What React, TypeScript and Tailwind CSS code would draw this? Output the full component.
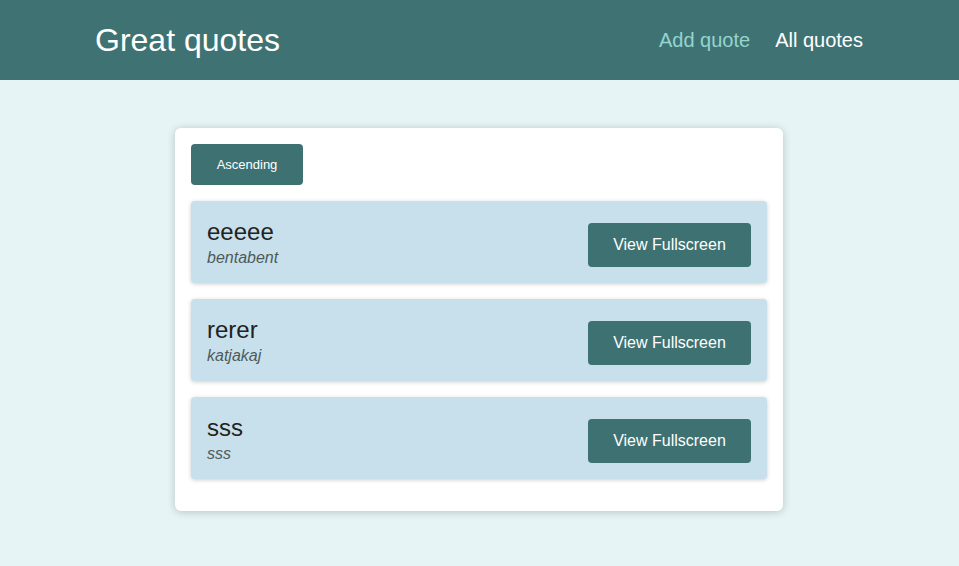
const quotes = [
  { id: "q1", text: "eeeee", author: "bentabent" },
  { id: "q2", text: "rerer", author: "katjakaj" },
  { id: "q3", text: "sss", author: "sss" },
];

const QuoteItem = ({ text, author }: { text: string; author: string }) => {
  return (
    <li className="flex items-start justify-between rounded bg-[#c8e0eb] p-4 shadow-[0_1px_4px_rgba(0,0,0,0.2)]">
      <figure>
        <blockquote className="text-[24px] leading-[30px] text-[#222]">{text}</blockquote>
        <figcaption className="mt-[1px] text-[16px] italic leading-[19px] text-[#4e5a5a]">{author}</figcaption>
      </figure>
      <a
        href="#"
        className="mt-[6px] flex h-[44px] w-[163px] items-center justify-center rounded bg-[#3e7272] text-[16px] text-white"
      >
        View Fullscreen
      </a>
    </li>
  );
};

export default function App() {
  return (
    <div className="min-h-[566px] bg-[#e6f4f5] font-['Liberation_Sans',Arial,sans-serif]">
      {/* Header */}
      <header className="flex h-20 items-center justify-between bg-[#3f7373] pl-[95px] pr-[96px]">
        <h1 className="text-[32px] leading-none text-white">Great quotes</h1>
        <nav className="flex items-center gap-[25px] pl-px text-[20px]">
          <a href="#" className="text-[#95d5cf]">Add quote</a>
          <a href="#" className="text-white">All quotes</a>
        </nav>
      </header>

      {/* Quote list */}
      <main className="flex justify-center pt-12 pr-px">
        <div className="w-[608px] rounded-md bg-white p-4 shadow-[0_1px_8px_rgba(0,0,0,0.2)]">
          <button className="h-[41px] w-[112px] rounded bg-[#3e7272] text-[13px] text-white">
            Ascending
          </button>
          <ul className="mt-4 flex flex-col gap-4 pb-4">
            {quotes.map((q) => (
              <QuoteItem key={q.id} text={q.text} author={q.author} />
            ))}
          </ul>
        </div>
      </main>
    </div>
  );
}
